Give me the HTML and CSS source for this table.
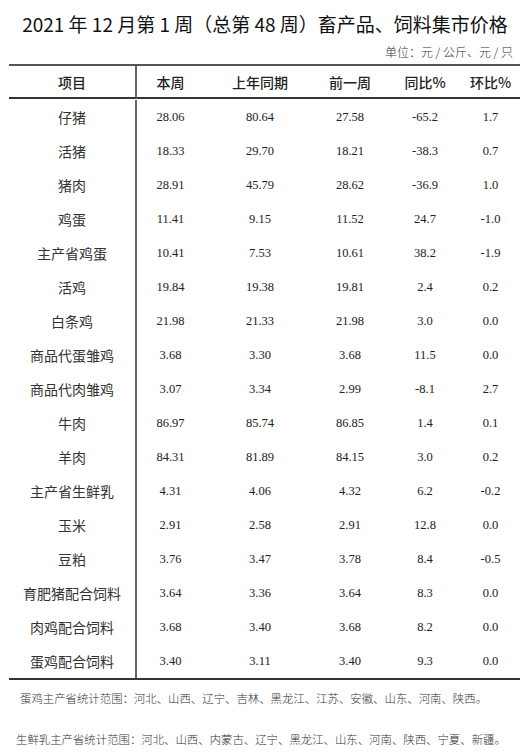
FILE: index.html
```html
<!DOCTYPE html>
<html lang="zh-CN">
<head>
<meta charset="utf-8">
<title>畜产品、饲料集市价格</title>
<link rel="stylesheet" href="styles.css">
</head>
<body>
<div class="page">
  <h1 class="title">2021 年 12 月第 1 周（总第 48 周）畜产品、饲料集市价格</h1>
  <div class="unit">单位：元 / 公斤、元 / 只</div>
  <div class="grid">
    <div class="cell head first">项目</div>
    <div class="cell head">本周</div>
    <div class="cell head">上年同期</div>
    <div class="cell head">前一周</div>
    <div class="cell head">同比%</div>
    <div class="cell head last">环比%</div>

    <div class="cell name">仔猪</div><div class="cell num">28.06</div><div class="cell num">80.64</div><div class="cell num">27.58</div><div class="cell num">-65.2</div><div class="cell num last">1.7</div>
    <div class="cell name">活猪</div><div class="cell num">18.33</div><div class="cell num">29.70</div><div class="cell num">18.21</div><div class="cell num">-38.3</div><div class="cell num last">0.7</div>
    <div class="cell name">猪肉</div><div class="cell num">28.91</div><div class="cell num">45.79</div><div class="cell num">28.62</div><div class="cell num">-36.9</div><div class="cell num last">1.0</div>
    <div class="cell name">鸡蛋</div><div class="cell num">11.41</div><div class="cell num">9.15</div><div class="cell num">11.52</div><div class="cell num">24.7</div><div class="cell num last">-1.0</div>
    <div class="cell name">主产省鸡蛋</div><div class="cell num">10.41</div><div class="cell num">7.53</div><div class="cell num">10.61</div><div class="cell num">38.2</div><div class="cell num last">-1.9</div>
    <div class="cell name">活鸡</div><div class="cell num">19.84</div><div class="cell num">19.38</div><div class="cell num">19.81</div><div class="cell num">2.4</div><div class="cell num last">0.2</div>
    <div class="cell name">白条鸡</div><div class="cell num">21.98</div><div class="cell num">21.33</div><div class="cell num">21.98</div><div class="cell num">3.0</div><div class="cell num last">0.0</div>
    <div class="cell name">商品代蛋雏鸡</div><div class="cell num">3.68</div><div class="cell num">3.30</div><div class="cell num">3.68</div><div class="cell num">11.5</div><div class="cell num last">0.0</div>
    <div class="cell name">商品代肉雏鸡</div><div class="cell num">3.07</div><div class="cell num">3.34</div><div class="cell num">2.99</div><div class="cell num">-8.1</div><div class="cell num last">2.7</div>
    <div class="cell name">牛肉</div><div class="cell num">86.97</div><div class="cell num">85.74</div><div class="cell num">86.85</div><div class="cell num">1.4</div><div class="cell num last">0.1</div>
    <div class="cell name">羊肉</div><div class="cell num">84.31</div><div class="cell num">81.89</div><div class="cell num">84.15</div><div class="cell num">3.0</div><div class="cell num last">0.2</div>
    <div class="cell name">主产省生鲜乳</div><div class="cell num">4.31</div><div class="cell num">4.06</div><div class="cell num">4.32</div><div class="cell num">6.2</div><div class="cell num last">-0.2</div>
    <div class="cell name">玉米</div><div class="cell num">2.91</div><div class="cell num">2.58</div><div class="cell num">2.91</div><div class="cell num">12.8</div><div class="cell num last">0.0</div>
    <div class="cell name">豆粕</div><div class="cell num">3.76</div><div class="cell num">3.47</div><div class="cell num">3.78</div><div class="cell num">8.4</div><div class="cell num last">-0.5</div>
    <div class="cell name">育肥猪配合饲料</div><div class="cell num">3.64</div><div class="cell num">3.36</div><div class="cell num">3.64</div><div class="cell num">8.3</div><div class="cell num last">0.0</div>
    <div class="cell name">肉鸡配合饲料</div><div class="cell num">3.68</div><div class="cell num">3.40</div><div class="cell num">3.68</div><div class="cell num">8.2</div><div class="cell num last">0.0</div>
    <div class="cell name">蛋鸡配合饲料</div><div class="cell num">3.40</div><div class="cell num">3.11</div><div class="cell num">3.40</div><div class="cell num">9.3</div><div class="cell num last">0.0</div>
  </div>
  <p class="note note-1">蛋鸡主产省统计范围：河北、山西、辽宁、吉林、黑龙江、江苏、安徽、山东、河南、陕西。</p>
  <p class="note note-2">生鲜乳主产省统计范围：河北、山西、内蒙古、辽宁、黑龙江、山东、河南、陕西、宁夏、新疆。</p>
</div>
</body>
</html>
```

FILE: styles.css
```css
html, body {
  margin: 0;
  padding: 0;
  background: #ffffff;
}

.page {
  width: 530px;
  display: flex;
  flex-direction: column;
  font-family: "Noto Sans CJK SC", "Liberation Sans", sans-serif;
  color: #222;
}

.title {
  margin: 12px 0 0 0;
  font-size: 19px;
  line-height: 24px;
  font-weight: 400;
  color: #111;
  text-align: center;
  white-space: nowrap;
}

.unit {
  margin-top: 8px;
  padding-right: 17px;
  font-size: 12px;
  line-height: 16px;
  font-weight: 300;
  text-align: right;
  color: #333;
}

.grid {
  margin: 4px 0 0 9px;
  width: 511px;
  display: grid;
  grid-template-columns: 128px 67px 112px 68px 82px 54px;
  grid-auto-rows: 34px;
  border-top: 2px solid #555;
  border-bottom: 2px solid #333;
}

.cell {
  box-sizing: border-box;
  display: flex;
  align-items: center;
  justify-content: center;
  white-space: nowrap;
}

.head {
  height: 33px;
  border-bottom: 2px solid #333;
  font-size: 14px;
  font-weight: 500;
  color: #222;
}

.first,
.name {
  border-right: 2px solid #666;
}

.name {
  font-size: 14px;
  font-weight: 400;
  color: #333;
}

.num {
  font-family: "Liberation Serif", serif;
  font-size: 12.5px;
  color: #222;
}

.last {
  padding-right: 5px;
}

.note {
  margin: 0;
  font-size: 11.4px;
  line-height: 20px;
  font-weight: 300;
  color: #333;
  white-space: nowrap;
}

.note-1 {
  margin-top: 8px;
  padding-left: 20px;
}

.note-2 {
  margin-top: 21px;
  padding-left: 16px;
}
```
